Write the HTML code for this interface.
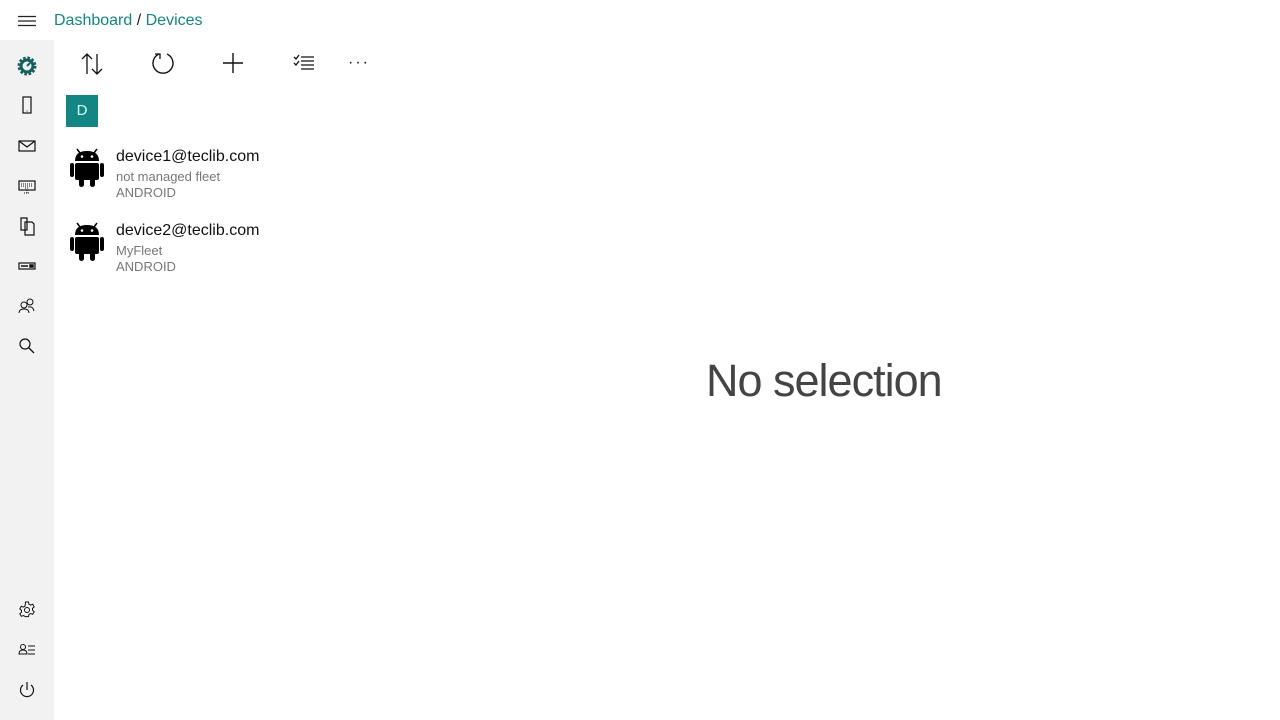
<!DOCTYPE html>
<html><head><meta charset="utf-8"><style>
*{margin:0;padding:0;box-sizing:border-box}
body{width:1280px;height:720px;background:#fff;font-family:"Liberation Sans",sans-serif;position:relative;overflow:hidden}
.side{position:absolute;left:0;top:40px;width:54px;height:680px;background:#f2f2f2}
.ic{position:absolute;left:17px;width:20px;height:20px}
svg{overflow:visible}
.crumb{position:absolute;left:54px;top:12px;font-size:16px;color:#138582}
.crumb span{color:#222}
.tb{position:absolute;top:52px}
.d{position:absolute;left:66px;top:95px;width:32px;height:32px;background:#138582;color:#cfe;font-size:15px;text-align:center;line-height:32px}
.item{position:absolute;left:116px}
.item .n{font-size:16px;color:#111}
.item .s{font-size:13px;color:#777;line-height:16px}
.none{position:absolute;left:706px;top:355px;font-size:45px;color:#444;font-weight:300;letter-spacing:-1px}
</style></head><body>
<svg style="position:absolute;left:18px;top:15px" width="18" height="12"><path d="M0 1.5H18M0 6H18M0 10.5H18" stroke="#222" stroke-width="1.2"/></svg>
<div class="crumb">Dashboard <span>/</span> Devices</div>
<div class="side">
<svg class="ic" style="top:16px" viewBox="0 0 20 20"><circle cx="10" cy="10" r="8" fill="none" stroke="#155f5f" stroke-width="3" stroke-dasharray="2.5 1.7"/><circle cx="10" cy="10" r="6" fill="none" stroke="#155f5f" stroke-width="3"/><path d="M10 10L13 7" stroke="#155f5f" stroke-width="2"/></svg>
<svg class="ic" style="top:56px" viewBox="0 0 20 20"><rect x="6" y="1" width="8" height="16" fill="none" stroke="#111" stroke-width="1.2"/><path d="M9.5 15h1" stroke="#111"/></svg>
<svg class="ic" style="top:96px" viewBox="0 0 20 20"><rect x="2" y="5" width="16" height="10" fill="none" stroke="#111" stroke-width="1.2"/><path d="M2 5L10 11L18 5" fill="none" stroke="#111" stroke-width="1.2"/></svg>
<svg class="ic" style="top:136px" viewBox="0 0 20 20"><rect x="2" y="5" width="16" height="9" fill="none" stroke="#111" stroke-width="1.2"/><path d="M4 8h12M4 10h12M8 12h4M10 14v3M7 17h6" stroke="#111" stroke-dasharray="1 1"/></svg>
<svg class="ic" style="top:176px" viewBox="0 0 20 20"><path d="M4 2h6v12H4z M8 6h7l2 2v11H8z" fill="#f2f2f2" stroke="#111" stroke-width="1.2"/></svg>
<svg class="ic" style="top:216px" viewBox="0 0 20 20"><rect x="2" y="7" width="16" height="6" fill="none" stroke="#111" stroke-width="1.2"/><path d="M4 10h7M13 9h3v2h-3z" stroke="#111" stroke-width="1.5"/></svg>
<svg class="ic" style="top:256px" viewBox="0 0 20 20"><circle cx="7" cy="9" r="3" fill="none" stroke="#111"/><circle cx="13" cy="6" r="3" fill="none" stroke="#111"/><path d="M2 17q0-4 5-4t5 4M11 11q5-1 6 4" fill="none" stroke="#111"/></svg>
<svg class="ic" style="top:296px" viewBox="0 0 20 20"><circle cx="8" cy="8" r="5" fill="none" stroke="#111" stroke-width="1.2"/><path d="M11.5 11.5L17 17" stroke="#111" stroke-width="1.3"/></svg>
<svg class="ic" style="top:560px" viewBox="0 0 20 20"><path d="M8.5 2h3l.5 2.2 1.6.9 2.1-.8 1.5 2.6-1.7 1.5v1.8l1.7 1.5-1.5 2.6-2.1-.8-1.6.9-.5 2.2h-3L8 16.4l-1.6-.9-2.1.8-1.5-2.6 1.7-1.5V10.4L2.8 8.9 4.3 6.3l2.1.8L8 6.2z" fill="none" stroke="#111" stroke-width="1"/><circle cx="10" cy="10" r="2.5" fill="none" stroke="#111"/></svg>
<svg class="ic" style="top:600px" viewBox="0 0 20 20"><circle cx="6" cy="7" r="2.5" fill="none" stroke="#111"/><path d="M2 14q0-4 4-4t4 4zM11 6h7M11 10h7M11 14h7" fill="none" stroke="#111"/></svg>
<svg class="ic" style="top:640px" viewBox="0 0 20 20"><path d="M6 5A6.5 6.5 0 1 0 14 5" fill="none" stroke="#111" stroke-width="1.2"/><path d="M10 2v8" stroke="#111" stroke-width="1.2"/></svg>
</div>
<svg class="tb" style="left:81px" width="22" height="24"><path d="M6 2v20M1 7l5-5 5 5M16 2v20M11 17l5 5 5-5" fill="none" stroke="#111" stroke-width="1.3"/></svg>
<svg class="tb" style="left:151px" width="24" height="24"><path d="M8 2A10 10 0 1 0 16 2" fill="none" stroke="#111" stroke-width="1.4"/><path d="M4 2h5v5" fill="none" stroke="#111" stroke-width="1.3"/></svg>
<svg class="tb" style="left:222px" width="22" height="22"><path d="M11 1v20M1 11h20" stroke="#111" stroke-width="1.4"/></svg>
<svg class="tb" style="left:293px" width="22" height="20"><path d="M1 5l2 2 3-4M1 11l2 2 3-4M8 5h13M8 9h13M8 13h13M8 17h13" fill="none" stroke="#111" stroke-width="1.3"/></svg>
<div style="position:absolute;left:348px;top:54px;font-size:16px;letter-spacing:2px;color:#111">···</div>
<div class="d">D</div>
<svg style="position:absolute;left:70px;top:146px" width="34" height="42" viewBox="0 0 34 42"><path d="M7 3l3 4M27 3l-3 4" stroke="#000" stroke-width="1.5"/><path d="M5 15Q5 5 17 5T29 15z" fill="#000"/><circle cx="12" cy="10.5" r="1.3" fill="#fff"/><circle cx="22" cy="10.5" r="1.3" fill="#fff"/><rect x="5" y="17" width="24" height="17" rx="2" fill="#000"/><rect x="0" y="17" width="4" height="14" rx="2" fill="#000"/><rect x="30" y="17" width="4" height="14" rx="2" fill="#000"/><rect x="9" y="32" width="5" height="9" rx="2.5" fill="#000"/><rect x="20" y="32" width="5" height="9" rx="2.5" fill="#000"/></svg>
<svg style="position:absolute;left:70px;top:220px" width="34" height="42" viewBox="0 0 34 42"><path d="M7 3l3 4M27 3l-3 4" stroke="#000" stroke-width="1.5"/><path d="M5 15Q5 5 17 5T29 15z" fill="#000"/><circle cx="12" cy="10.5" r="1.3" fill="#fff"/><circle cx="22" cy="10.5" r="1.3" fill="#fff"/><rect x="5" y="17" width="24" height="17" rx="2" fill="#000"/><rect x="0" y="17" width="4" height="14" rx="2" fill="#000"/><rect x="30" y="17" width="4" height="14" rx="2" fill="#000"/><rect x="9" y="32" width="5" height="9" rx="2.5" fill="#000"/><rect x="20" y="32" width="5" height="9" rx="2.5" fill="#000"/></svg>
<div class="item" style="top:148px"><div class="n">device1@teclib.com</div><div class="s" style="margin-top:3px">not managed fleet</div><div class="s">ANDROID</div></div>
<div class="item" style="top:222px"><div class="n">device2@teclib.com</div><div class="s" style="margin-top:3px">MyFleet</div><div class="s">ANDROID</div></div>
<div class="none">No selection</div>
</body></html>
